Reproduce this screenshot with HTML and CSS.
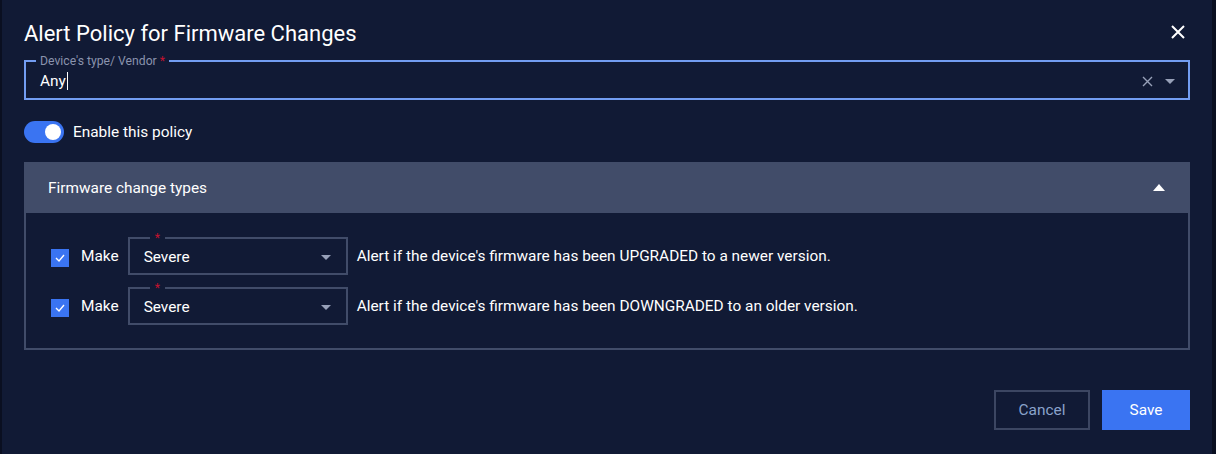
FILE: index.html
```html
<html>
<head>
<title>Alert Policy for Firmware Changes</title>
<link rel="stylesheet" href="styles.css">
</head>
<body>

    <div class="dialog">
        <div class="dialog-head">
            <h2>Alert Policy for Firmware Changes</h2>
            <svg class="close" width="14" height="14" viewBox="0 0 14 14"><path d="M1 1L13 13M13 1L1 13" stroke="#fff" stroke-width="2"/></svg>
        </div>

        <fieldset class="vendor">
            <legend>Device's type/ Vendor <span class="req">*</span></legend>
            <span class="value">Any</span><span class="caret"></span>
            <span class="adorn">
                <svg width="11" height="11" viewBox="0 0 11 11"><path d="M1 1L10 10M10 1L1 10" stroke="#97a0b8" stroke-width="1.4"/></svg>
                <svg width="10" height="5" viewBox="0 0 10 5"><path d="M0 0H10L5 5Z" fill="#97a0b8"/></svg>
            </span>
        </fieldset>

        <div class="toggle-row">
            <span class="toggle"><span class="knob"></span></span>
            <span>Enable this policy</span>
        </div>

        <div class="panel">
            <div class="panel-head">
                <span>Firmware change types</span>
                <svg width="12" height="7" viewBox="0 0 12 7"><path d="M0 7H12L6 0Z" fill="#fff"/></svg>
            </div>
            <div class="panel-body">
                <div class="rule">
                    <span class="check"><svg width="12" height="10" viewBox="0 0 12 10"><path d="M2 5L5 8L10 2" stroke="#fff" stroke-width="1.4" fill="none"/></svg></span>
                    <span class="make">Make</span>
                    <fieldset class="level">
                        <legend><span class="req">*</span></legend>
                        <span>Severe</span>
                        <svg width="10" height="5" viewBox="0 0 10 5"><path d="M0 0H10L5 5Z" fill="#97a0b8"/></svg>
                    </fieldset>
                    <span>Alert if the device's firmware has been UPGRADED to a newer version.</span>
                </div>
                <div class="rule">
                    <span class="check"><svg width="12" height="10" viewBox="0 0 12 10"><path d="M2 5L5 8L10 2" stroke="#fff" stroke-width="1.4" fill="none"/></svg></span>
                    <span class="make">Make</span>
                    <fieldset class="level">
                        <legend><span class="req">*</span></legend>
                        <span>Severe</span>
                        <svg width="10" height="5" viewBox="0 0 10 5"><path d="M0 0H10L5 5Z" fill="#97a0b8"/></svg>
                    </fieldset>
                    <span>Alert if the device's firmware has been DOWNGRADED to an older version.</span>
                </div>
            </div>
        </div>

        <div class="actions">
            <button class="cancel">Cancel</button>
            <button class="save">Save</button>
        </div>
    </div>

</body>
</html>
```

FILE: styles.css
```css
body {
    margin: 0;
    background: #0a0f21;
    font-family: Roboto, "Liberation Sans", sans-serif;
    font-size: 15.4px;
    color: #fff;
}

.dialog {
    margin-left: 2px;
    width: 1210px;
    height: 454px;
    box-sizing: border-box;
    background: #111a35;
    padding: 0 22px 0 22px;
}

.dialog-head {
    display: flex;
    align-items: center;
    justify-content: space-between;
    height: 62px;
    padding-right: 5px;
}

h2 {
    margin: 0;
    font-size: 22px;
    font-weight: 400;
    padding-top: 4px;
}

.close {
    margin-top: 2px;
}

/* outlined inputs */
fieldset {
    margin: 0;
    box-sizing: border-box;
    display: flex;
    align-items: center;
}

legend {
    font-size: 12.2px;
    line-height: 10px;
    padding: 0 4px;
}

.req {
    color: #c4122f;
}

.vendor {
    height: 44px;
    margin-top: -6px;
    border: 2px solid #739df2;
    padding: 0 13px 2px 14px;
}

.vendor legend {
    color: #8a93ad;
    margin-left: -4px;
}

.caret {
    display: inline-block;
    width: 1px;
    height: 18px;
    background: #fff;
    margin-left: 1px;
}

.adorn {
    margin-left: auto;
    display: flex;
    align-items: center;
    gap: 12px;
}

.toggle-row {
    display: flex;
    align-items: center;
    gap: 9px;
    margin-top: 21px;
    height: 22px;
}

.toggle {
    width: 40px;
    height: 22px;
    border-radius: 11px;
    background: #3a74f2;
    display: flex;
    align-items: center;
    justify-content: flex-end;
    padding: 0 3px;
    box-sizing: border-box;
}

.knob {
    width: 16px;
    height: 16px;
    border-radius: 50%;
    background: #fff;
}

.panel {
    margin-top: 19px;
    width: 1166px;
}

.panel-head {
    background: #414c69;
    height: 51px;
    display: flex;
    align-items: center;
    justify-content: space-between;
    padding: 0 25px 0 24px;
}

.panel-body {
    border: 2px solid #414c69;
    border-top: none;
    height: 137px;
    box-sizing: border-box;
    padding: 24px 0 0 25px;
    display: flex;
    flex-direction: column;
    gap: 12px;
}

.rule {
    display: flex;
    align-items: center;
    height: 38px;
}

.check {
    width: 18px;
    height: 18px;
    background: #3a74f2;
    display: flex;
    align-items: center;
    justify-content: center;
    margin-top: 3px;
}

.make {
    margin-left: 12px;
    margin-right: 9px;
}

.level {
    width: 220px;
    height: 42px;
    margin-top: -5px;
    border: 2px solid #414c69;
    padding: 0 15px 1px 14px;
    justify-content: space-between;
}

.level legend {
    margin-left: 6px;
    padding: 0 5px;
}

.level + span {
    margin-left: 9px;
}

.actions {
    display: flex;
    justify-content: flex-end;
    gap: 12px;
    margin-top: 40px;
}

button {
    font-family: inherit;
    font-size: 15.4px;
    height: 40px;
    border: none;
    cursor: pointer;
}

.cancel {
    width: 96px;
    background: transparent;
    border: 2px solid #3c4662;
    color: #8aa3cb;
}

.save {
    width: 88px;
    background: #3a74f2;
    color: #fff;
}
```
